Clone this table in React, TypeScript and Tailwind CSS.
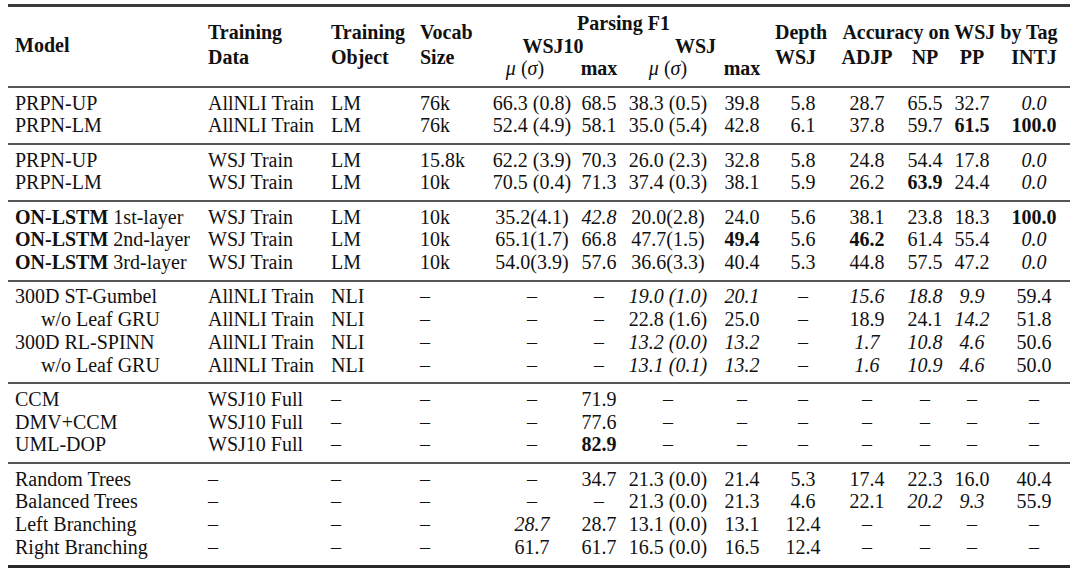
import React from "react";

// parsing results table (ON-LSTM style), laid out on a fixed column grid
type Row = { model: React.ReactNode; indent?: boolean; cells: string[] };

const D = "–";

const on = (rest: string) => (
  <>
    <span className="font-bold">ON-LSTM</span> {rest}
  </>
);

const sections: Row[][] = [
  [
    { model: "PRPN-UP", cells: ["AllNLI Train", "LM", "76k", "66.3 (0.8)", "68.5", "38.3 (0.5)", "39.8", "5.8", "28.7", "65.5", "32.7", "i:0.0"] },
    { model: "PRPN-LM", cells: ["AllNLI Train", "LM", "76k", "52.4 (4.9)", "58.1", "35.0 (5.4)", "42.8", "6.1", "37.8", "59.7", "b:61.5", "b:100.0"] },
  ],
  [
    { model: "PRPN-UP", cells: ["WSJ Train", "LM", "15.8k", "62.2 (3.9)", "70.3", "26.0 (2.3)", "32.8", "5.8", "24.8", "54.4", "17.8", "i:0.0"] },
    { model: "PRPN-LM", cells: ["WSJ Train", "LM", "10k", "70.5 (0.4)", "71.3", "37.4 (0.3)", "38.1", "5.9", "26.2", "b:63.9", "24.4", "i:0.0"] },
  ],
  [
    { model: on("1st-layer"), cells: ["WSJ Train", "LM", "10k", "35.2(4.1)", "i:42.8", "20.0(2.8)", "24.0", "5.6", "38.1", "23.8", "18.3", "b:100.0"] },
    { model: on("2nd-layer"), cells: ["WSJ Train", "LM", "10k", "65.1(1.7)", "66.8", "47.7(1.5)", "b:49.4", "5.6", "b:46.2", "61.4", "55.4", "i:0.0"] },
    { model: on("3rd-layer"), cells: ["WSJ Train", "LM", "10k", "54.0(3.9)", "57.6", "36.6(3.3)", "40.4", "5.3", "44.8", "57.5", "47.2", "i:0.0"] },
  ],
  [
    { model: "300D ST-Gumbel", cells: ["AllNLI Train", "NLI", D, D, D, "i:19.0 (1.0)", "i:20.1", D, "i:15.6", "i:18.8", "i:9.9", "59.4"] },
    { model: "w/o Leaf GRU", indent: true, cells: ["AllNLI Train", "NLI", D, D, D, "22.8 (1.6)", "25.0", D, "18.9", "24.1", "i:14.2", "51.8"] },
    { model: "300D RL-SPINN", cells: ["AllNLI Train", "NLI", D, D, D, "i:13.2 (0.0)", "i:13.2", D, "i:1.7", "i:10.8", "i:4.6", "50.6"] },
    { model: "w/o Leaf GRU", indent: true, cells: ["AllNLI Train", "NLI", D, D, D, "i:13.1 (0.1)", "i:13.2", D, "i:1.6", "i:10.9", "i:4.6", "50.0"] },
  ],
  [
    { model: "CCM", cells: ["WSJ10 Full", D, D, D, "71.9", D, D, D, D, D, D, D] },
    { model: "DMV+CCM", cells: ["WSJ10 Full", D, D, D, "77.6", D, D, D, D, D, D, D] },
    { model: "UML-DOP", cells: ["WSJ10 Full", D, D, D, "b:82.9", D, D, D, D, D, D, D] },
  ],
  [
    { model: "Random Trees", cells: [D, D, D, D, "34.7", "21.3 (0.0)", "21.4", "5.3", "17.4", "22.3", "16.0", "40.4"] },
    { model: "Balanced Trees", cells: [D, D, D, D, D, "21.3 (0.0)", "21.3", "4.6", "22.1", "i:20.2", "i:9.3", "55.9"] },
    { model: "Left Branching", cells: [D, D, D, "i:28.7", "28.7", "13.1 (0.0)", "13.1", "12.4", D, D, D, D] },
    { model: "Right Branching", cells: [D, D, D, "61.7", "61.7", "16.5 (0.0)", "16.5", "12.4", D, D, D, D] },
  ],
];

const cols =
  "grid grid-cols-[193px_123px_89px_81px_76px_58px_80px_68px_54px_74px_42px_52px_72px]";

function Val({ v }: { v: string }) {
  if (v.startsWith("b:")) return <span className="font-bold">{v.slice(2)}</span>;
  if (v.startsWith("i:")) return <span className="italic">{v.slice(2)}</span>;
  return <span>{v}</span>;
}

const MuSigma = () => (
  <span className="font-normal">
    <i>μ</i> (<i>σ</i>)
  </span>
);

function Header() {
  return (
    <div className={`${cols} grid-rows-[27.5px_22.5px_29px] h-[79px] font-bold leading-[22.7px]`}>
      <div className="col-start-1 row-span-3 row-start-1 pl-[7px] pt-[26.5px]">Model</div>
      <div className="col-start-2 row-span-3 row-start-1 pl-[7px] pt-[13px] leading-[25px]">
        Training
        <br />
        Data
      </div>
      <div className="col-start-3 row-span-3 row-start-1 pl-[7px] pt-[13px] leading-[25px]">
        Training
        <br />
        Object
      </div>
      <div className="col-start-4 row-span-3 row-start-1 pl-[7px] pt-[13px] leading-[25px]">
        Vocab
        <br />
        Size
      </div>
      <div className="col-start-5 col-span-4 row-start-1 flex justify-center pr-[23px] pt-[5px] whitespace-nowrap">
        Parsing F1
      </div>
      <div className="col-start-5 col-span-2 row-start-2 flex justify-center pr-[16px]">WSJ10</div>
      <div className="col-start-7 col-span-2 row-start-2 flex justify-center pr-[13px]">WSJ</div>
      <div className="col-start-5 row-start-3 flex justify-center pr-[14px] whitespace-nowrap">
        <MuSigma />
      </div>
      <div className="col-start-6 row-start-3 flex justify-center">max</div>
      <div className="col-start-7 row-start-3 flex justify-center whitespace-nowrap">
        <MuSigma />
      </div>
      <div className="col-start-8 row-start-3 flex justify-center">max</div>
      <div className="col-start-9 row-span-3 row-start-1 -ml-[1px] pt-[13px] leading-[25px]">
        Depth
        <br />
        WSJ
      </div>
      <div className="col-start-10 col-span-4 row-start-1 flex justify-center pt-[13px] leading-[25px] whitespace-nowrap">
        Accuracy on WSJ by Tag
      </div>
      {["ADJP", "NP", "PP", "INTJ"].map((t, i) => (
        <div
          key={t}
          className={`${["col-start-10", "col-start-11", "col-start-12", "col-start-13"][i]} row-start-2 row-span-2 flex justify-center pt-[10.5px] leading-[25px]`}
        >
          {t}
        </div>
      ))}
    </div>
  );
}

export default function App() {
  return (
    <div className="w-[1080px] h-[578px] bg-white pt-[4px] text-[20px] text-[#111] font-['Liberation_Serif','Times_New_Roman',serif]">
      <div className="ml-[8px] w-[1062px]">
        <div className="h-[3px] bg-[#3a3a3a]" />
        <Header />
        {sections.map((rows, si) => (
          <div key={si}>
            <div className="h-[2px] bg-[#555]" />
            <div className="pt-[3.6px] pb-[6.1px]">
              {rows.map((r, ri) => (
                <div key={ri} className={`${cols} h-[22.7px] leading-[22.7px]`}>
                  <div className={`whitespace-nowrap ${r.indent ? "pl-[33px]" : "pl-[7px]"}`}>{r.model}</div>
                  {r.cells.map((c, i) => (
                    <div
                      key={i}
                      className={i < 3 ? "pl-[7px] whitespace-nowrap" : "flex justify-center whitespace-nowrap"}
                    >
                      <Val v={c} />
                    </div>
                  ))}
                </div>
              ))}
            </div>
          </div>
        ))}
        <div className="h-[3px] bg-[#2a2a2a]" />
      </div>
    </div>
  );
}
